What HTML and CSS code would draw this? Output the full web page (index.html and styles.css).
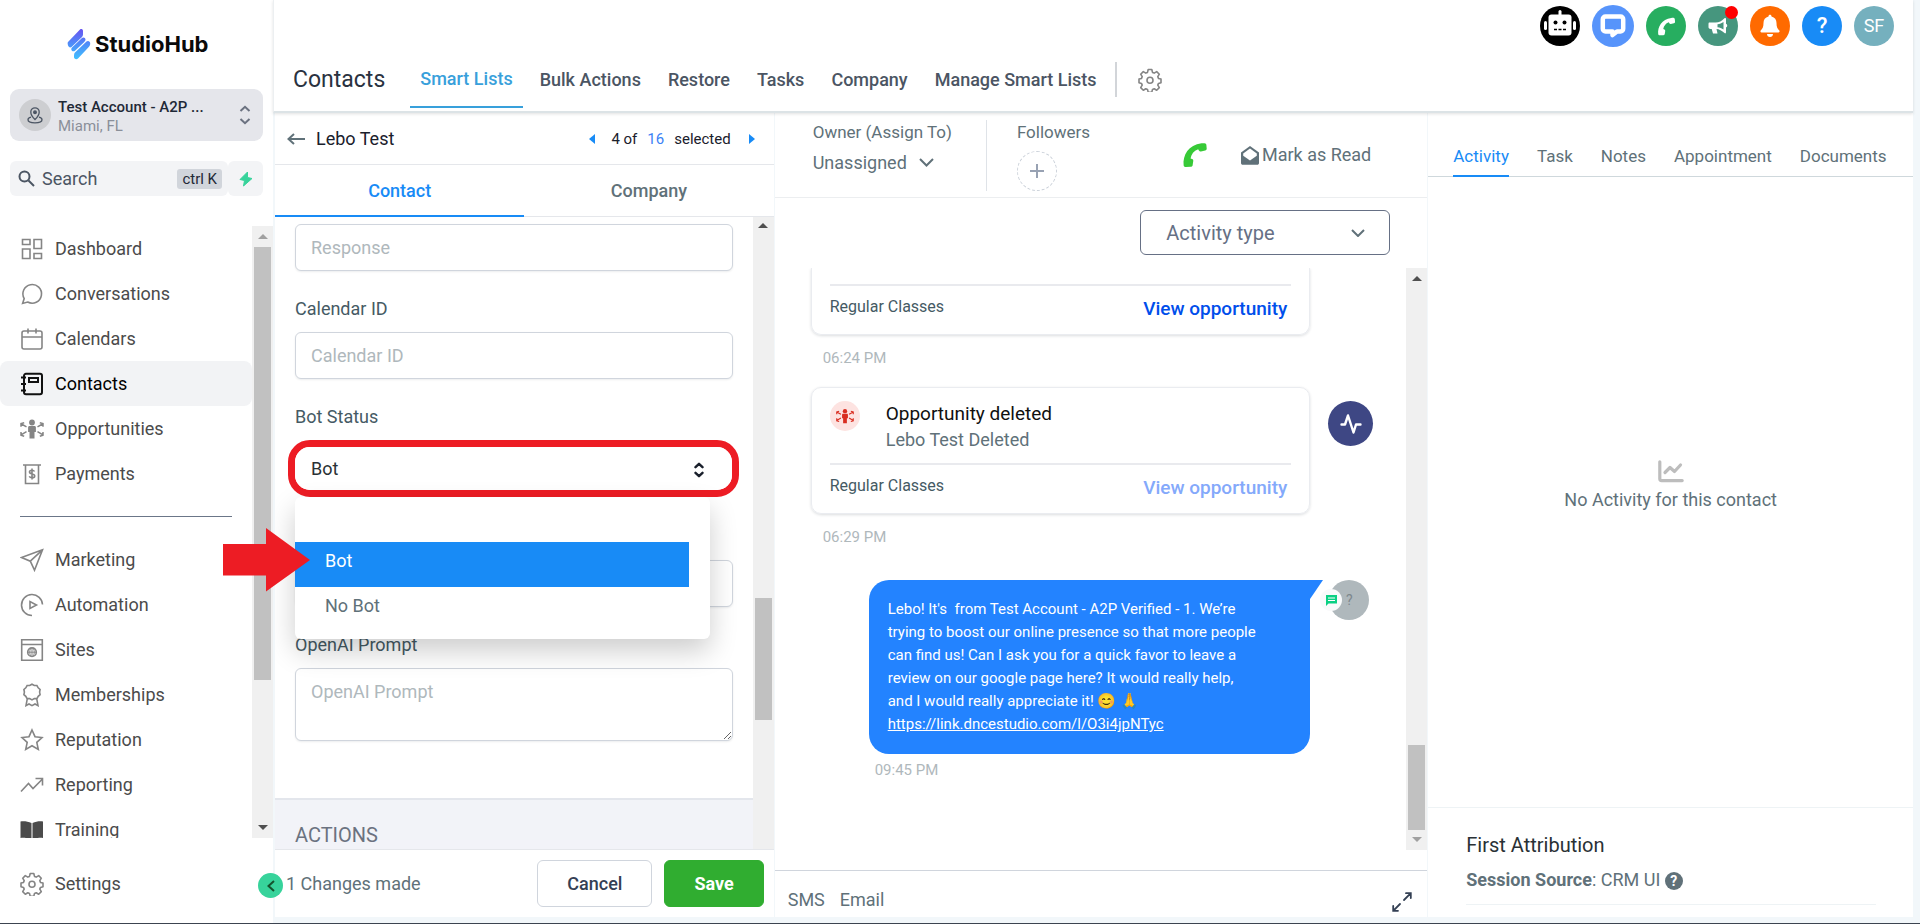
FILE: index.html
```html
<!DOCTYPE html>
<html lang="en">
<head>
	<meta charset="utf-8">
	<title>Contacts - StudioHub</title>
	<link rel="stylesheet" href="styles.css">
</head>
<body>

<div class="app">

	<!-- sidebar -->
	<aside class="sidebar">
		<a class="logo" href="#">
			<svg width="24" height="32" viewBox="0 0 24 32">
				<defs>
					<linearGradient id="lg" x1="0" y1="0" x2="0" y2="32" gradientUnits="userSpaceOnUse">
						<stop offset="0" stop-color="#6a4ff0"/><stop offset=".5" stop-color="#4f8df8"/><stop offset="1" stop-color="#3fc3ff"/>
					</linearGradient>
				</defs>
				<g fill="url(#lg)">
					<path d="M1 14 13 1.500c1-1 3-.5 3 1.500v3.500c0 1-.3 1.700-1 2.400L4.500 19C3 20.300.8 18.500.8 16.500.8 15.300.3 15 1 14z"/>
					<path d="M5 19.500 15 10c1.500-1.300 3.500-.2 3.500 1.500 0 1-.5 1.700-1.200 2.400L8 22.700c-1.500 1.300-3.800.3-3.700-1.500 0-.7.2-1.200.7-1.700z"/>
					<path d="M8 24.500 19.500 13.500c1.500-1.300 3.800-.2 3.700 1.800 0 1.700-.4 2.700-1.200 3.500L11 30.500c-1.500 1.300-4 .6-4-1.500 0-2 0-3.500 1-4.500z"/>
				</g>
			</svg>
			<span>StudioHub</span>
		</a>

		<button class="account" type="button">
			<span class="account-pin">
				<svg width="16" height="17" viewBox="0 0 16 17" fill="none" stroke="#4b5563" stroke-width="1.300">
					<path d="M8 12.500S3.800 8.500 3.800 5a4.200 4.200 0 0 1 8.400 0c0 3.500-4.200 7.500-4.200 7.500z"/><circle cx="8" cy="5.200" r="1.300" fill="#4b5563"/>
					<path d="M4 10.200C2.200 10.700 1 11.700 1 12.700 1 14.500 4 15.800 8 15.800s7-1.300 7-3.100c0-1-1.200-2-3-2.500"/>
				</svg>
			</span>
			<span class="account-text">
				<b>Test Account - A2P ...</b>
				<small>Miami, FL</small>
			</span>
			<svg width="12" height="20" viewBox="0 0 12 20" fill="none" stroke="#6b7280" stroke-width="2"><path d="M1.500 6 6 1.800 10.500 6M1.500 14 6 18.200 10.500 14"/></svg>
		</button>

		<div class="search-row">
			<label class="search">
				<svg width="17" height="17" viewBox="0 0 17 17" fill="none" stroke="#4b5563" stroke-width="2"><circle cx="6.500" cy="6.500" r="5"/><path d="m10.500 10.500 5.500 5.500"/></svg>
				<input type="text" placeholder="Search" aria-label="Search">
				<kbd>ctrl K</kbd>
			</label>
			<button class="bolt" type="button" aria-label="Quick actions">
				<svg width="14" height="16" viewBox="0 0 14 16" fill="#37d39b" stroke="#37d39b" stroke-linejoin="round"><path d="M8.500 1 1 8.500l4.500 1L4.500 15 13 7.500l-4.500-1z"/></svg>
			</button>
		</div>

		<div class="nav-wrap">
			<nav class="nav">
				<a href="#"><svg class="ico" viewBox="0 0 24 24"><path d="M2.500 2.500h7.500v5H2.500zM14 2.500h7.500v9H14zM2.500 12H10v9.500H2.500zM14 16.500h7.500v5H14z"/></svg>Dashboard</a>
				<a href="#"><svg class="ico" viewBox="0 0 24 24"><path d="M2.600 21.400l1.600-4.800a9.300 9.300 0 1 1 3.500 3.400z"/></svg>Conversations</a>
				<a href="#"><svg class="ico" viewBox="0 0 24 24"><path d="M4 4h16a2 2 0 0 1 2 2v14a2 2 0 0 1-2 2H4a2 2 0 0 1-2-2V6a2 2 0 0 1 2-2zM2 10h20M8 1.500V6.500M16 1.500V6.500"/></svg>Calendars</a>
				<a href="#" class="active"><svg class="ico" viewBox="0 0 24 24"><path d="M6 1.800h14a2 2 0 0 1 2 2v16.400a2 2 0 0 1-2 2H6a2 2 0 0 1-2-2V3.800a2 2 0 0 1 2-2zM1 5.500h5M1 12h5M1 18.500h5M9 6h9v4H9z"/></svg>Contacts</a>
				<a href="#"><svg class="ico fill" viewBox="0 0 24 24"><use href="#people"/></svg>Opportunities</a>
				<a href="#"><svg class="ico" viewBox="0 0 24 24"><path d="M3 3h18M5.500 3v18.500h13V3M14.500 9.500c-.5-1-1.300-1.200-2.500-1.200-1.500 0-2.500.7-2.500 1.800 0 2.600 5.200 1.200 5.200 3.900 0 1.200-1.200 1.800-2.700 1.800s-2.300-.5-2.700-1.500M12 6.500v11"/></svg>Payments</a>
				<hr>
				<a href="#"><svg class="ico" viewBox="0 0 24 24"><path d="M22.500 1.800 1.500 9.500l8.800 3.700 4.200 9zM22.500 1.800 10.300 13.200"/></svg>Marketing</a>
				<a href="#"><svg class="ico" viewBox="0 0 24 24"><path d="M12 22.500A10.500 10.500 0 1 1 22.500 11.500M10 8.500v7l6.500-3.500z"/></svg>Automation</a>
				<a href="#"><svg class="ico" viewBox="0 0 24 24"><path d="M1.700 1.700h20.600v20.600H1.700zM1.700 6.500h20.600"/><circle cx="12" cy="14.200" r="4.300"/><path d="M7.700 14.200h8.600M12 10v8.500M10.500 10.500c-1 2.500-1 5 0 7.500M13.500 10.500c1 2.500 1 5 0 7.500" stroke-width="1"/></svg>Sites</a>
				<a href="#"><svg class="ico" viewBox="0 0 24 24"><path d="M12 1.200l2.300 1.300h2.600l1.300 2.300 1.900 1.700-.5 2.600.5 2.500-1.900 1.700-1.300 2.300h-2.600L12 16.900l-2.300-1.300H7.100l-1.300-2.300-1.900-1.700.5-2.500-.5-2.600 1.900-1.700 1.300-2.300h2.600zM7.300 15.600 6 22.600l3-1.600 3 1.600 3-1.600 3 1.600-1.300-7"/></svg>Memberships</a>
				<a href="#"><svg class="ico" viewBox="0 0 24 24"><path d="M12 2l3 6.700 7 .8-5.200 4.800 1.500 7.200L12 17.800l-6.300 3.700 1.500-7.200L2 9.500l7-.8z"/></svg>Reputation</a>
				<a href="#"><svg class="ico" viewBox="0 0 24 24"><path d="M1 18.500l7.500-8 4.500 5L22.500 6M15.500 5.500h7v7"/></svg>Reporting</a>
				<a href="#"><svg class="ico fill dark" viewBox="0 0 24 24"><path d="M.5 3.500C4 3 8 3.500 11.500 5v16.500C8 20 4 19.500.5 20zM23 3.500c-3.500-.5-7 0-10.500 1.500v16.500c3.500-1.500 7-2 10.500-1.500z"/></svg>Training</a>
			</nav>
			<div class="bar bar-nav">
				<i class="up off"></i><i class="thumb"></i><i class="down"></i>
			</div>
		</div>

		<a class="settings" href="#"><svg class="ico" viewBox="0 0 24 24"><use href="#gear"/></svg>Settings</a>
	</aside>

	<div class="page">

		<!-- header -->
		<header class="header">
			<div class="top-icons">
				<button class="round robot" type="button" aria-label="Bot">
					<svg width="34" height="34" viewBox="0 0 34 34"><g fill="#fff"><rect x="15.500" y="1" width="3" height="6" rx="1.500"/><rect x="5.500" y="5.500" width="23" height="21" rx="3"/><rect x="1" y="12" width="3" height="9" rx="1.500"/><rect x="30" y="12" width="3" height="9" rx="1.500"/></g><circle cx="12.500" cy="13.500" r="2"/><circle cx="21.500" cy="13.500" r="2"/><path d="M11 20.500h12" stroke="#000" stroke-width="1.600" stroke-dasharray="3 1.500"/></svg>
				</button>
				<button class="round chat" type="button" aria-label="Chat">
					<svg width="26" height="26" viewBox="0 0 26 26" fill="none" stroke="#fff" stroke-width="4.500" stroke-linejoin="round"><path d="M5.500 3.500h15c1.500 0 2.700 1.200 2.700 2.700v9.600c0 1.500-1.200 2.700-2.700 2.700H17l-4.500 3.500v-3.500h-7c-1.500 0-2.700-1.200-2.700-2.700V6.200C2.800 4.700 4 3.500 5.500 3.500z"/></svg>
				</button>
				<button class="round phone" type="button" aria-label="Call"><svg width="19" height="19" viewBox="0 0 24 24" fill="#fff"><use href="#handset"/></svg></button>
				<button class="round news" type="button" aria-label="News">
					<svg width="20" height="20" viewBox="0 0 20 20"><path d="M1 6.500h6.500C11 6.500 14 5 16.500 2.200c.6-.6 1.500-.3 1.500.5v5c1.700.6 1.700 3.300 0 3.900v5c0 .8-.9 1.100-1.500.5C14 14.500 11 13 8.500 12.900l1 4.600H5l-1.300-4.600H2.500C1 12.900.500 12 .500 11V8c0-.8.2-1.300.5-1.500z" fill="#fff"/><path d="M9.500 8.200c2.300-.2 4.300-1 6-2.200v7.500c-1.700-1.200-3.700-2-6-2.200z" fill="#46967e"/></svg>
					<i class="dot"></i>
				</button>
				<button class="round bell" type="button" aria-label="Notifications"><svg width="20" height="24" viewBox="0 0 20 24" fill="#fff"><path d="M10 .8c.9 0 1.500.6 1.500 1.600 3.300.8 5 3.300 5 6.600 0 4 .8 5.500 2.800 7.600.6.700.2 1.900-.9 1.900H1.600c-1.100 0-1.500-1.200-.9-1.900 2-2.100 2.800-3.600 2.800-7.600 0-3.300 1.700-5.800 5-6.600 0-1 .6-1.600 1.500-1.600zM7 20h6c0 1.700-1.300 3-3 3s-3-1.300-3-3z"/></svg></button>
				<button class="round help" type="button" aria-label="Help">?</button>
				<button class="round user" type="button">SF</button>
			</div>
			<div class="header-nav">
				<h1>Contacts</h1>
				<nav class="tabs">
					<a href="#" class="on">Smart Lists</a>
					<a href="#">Bulk Actions</a>
					<a href="#">Restore</a>
					<a href="#">Tasks</a>
					<a href="#">Company</a>
					<a href="#">Manage Smart Lists</a>
				</nav>
				<button class="gear" type="button" aria-label="Settings"><svg class="ico" viewBox="0 0 24 24"><use href="#gear"/></svg></button>
			</div>
		</header>

		<main class="panels">

			<!-- contact details -->
			<section class="contact">
				<div class="contact-top">
					<a href="#" aria-label="Back"><svg width="18" height="12" viewBox="0 0 18 12" fill="none" stroke="#607179" stroke-width="2"><path d="M18 6H1.500M7 1 1.500 6 7 11"/></svg></a>
					<span class="name">Lebo Test</span>
					<div class="pager">
						<button type="button" aria-label="Previous"><svg width="6" height="10" viewBox="0 0 6 10" fill="#188bf6"><path d="M6 0v10L0 5z"/></svg></button>
						<span>4 of</span><a href="#">16</a><span>selected</span>
						<button type="button" aria-label="Next"><svg width="6" height="10" viewBox="0 0 6 10" fill="#188bf6"><path d="M0 0v10l6-5z"/></svg></button>
					</div>
				</div>
				<div class="contact-tabs">
					<a href="#" class="on">Contact</a>
					<a href="#">Company</a>
				</div>
				<div class="scroll-wrap">
					<form class="form">
						<input class="field" type="text" placeholder="Response" aria-label="Response">
						<label for="cal">Calendar ID</label>
						<input class="field" id="cal" type="text" placeholder="Calendar ID">
						<label for="bot">Bot Status</label>
						<div class="bot-select">
							<select id="bot"><option>Bot</option><option>No Bot</option></select>
							<svg width="10" height="16" viewBox="0 0 10 16" fill="none" stroke="#1a202c" stroke-width="2.400" stroke-linecap="round" stroke-linejoin="round"><path d="M1.500 5.200 5 1.800l3.500 3.400M1.500 10.800 5 14.200l3.500-3.400"/></svg>
							<div class="menu" role="listbox" aria-label="Bot Status">
								<button type="button" role="option" aria-label="None"></button>
								<button type="button" role="option" aria-selected="true" class="sel">Bot</button>
								<button type="button" role="option">No Bot</button>
							</div>
						</div>
						<input class="field under" type="text" aria-label="Value">
						<label for="prompt">OpenAI Prompt</label>
						<textarea class="field" id="prompt" placeholder="OpenAI Prompt"></textarea>
						<div class="actions">ACTIONS</div>
					</form>
					<div class="bar bar-contact">
						<i class="up"></i><i class="thumb"></i>
					</div>
				</div>
				<div class="contact-foot">
					<span>1 Changes made</span>
					<button type="button" class="btn">Cancel</button>
					<button type="button" class="btn save">Save</button>
				</div>
			</section>

			<!-- conversation -->
			<section class="talk">
				<div class="talk-top">
					<div class="owner">
						<span>Owner (Assign To)</span>
						<button type="button">Unassigned <svg width="15" height="9" viewBox="0 0 15 9" fill="none" stroke="#607179" stroke-width="2"><path d="M1 1l6.500 6.500L14 1"/></svg></button>
					</div>
					<div class="followers">
						<span>Followers</span>
						<button type="button" class="plus" aria-label="Add follower"><svg width="14" height="14" viewBox="0 0 14 14" stroke="#98a2b3" stroke-width="2"><path d="M7 0v14M0 7h14"/></svg></button>
					</div>
					<button type="button" class="call" aria-label="Call"><svg width="26" height="26" viewBox="0 0 24 24" fill="#37ca37"><use href="#handset"/></svg></button>
					<button type="button" class="mark"><svg width="18" height="19" viewBox="0 0 18 19"><path d="M0 6.500 9 0l9 6.500V17c0 1-.8 1.800-1.800 1.800H1.800C.8 18.800 0 18 0 17z" fill="#607179"/><path d="M2.200 7.500 9 2.500l6.800 5v2.200L9 14.500 2.200 9.700z" fill="#fff"/></svg>Mark as Read</button>
				</div>
				<div class="filter">
					<select aria-label="Activity type"><option>Activity type</option></select>
					<svg width="14" height="8" viewBox="0 0 14 8" fill="none" stroke="#607179" stroke-width="2"><path d="M1 1l6 6 6-6"/></svg>
				</div>
				<div class="scroll-wrap">
					<div class="feed">
						<article class="card cut">
							<div class="card-foot"><span>Regular Classes</span><a href="#">View opportunity</a></div>
						</article>
						<time>06:24 PM</time>
						<div class="row">
							<article class="card">
								<div class="card-head">
									<span class="opp"><svg width="18" height="18" viewBox="0 0 24 24"><use href="#people"/></svg></span>
									<div><h2>Opportunity deleted</h2><p>Lebo Test Deleted</p></div>
								</div>
								<div class="card-foot"><span>Regular Classes</span><a href="#" class="off">View opportunity</a></div>
							</article>
							<span class="pulse"><svg width="22" height="20" viewBox="0 0 22 20" fill="none" stroke="#fff" stroke-width="2.400" stroke-linecap="round" stroke-linejoin="round"><path d="M1.500 10.500H5L8 1.500l5.500 17 2.500-8h4.500"/></svg></span>
						</div>
						<time>06:29 PM</time>
						<div class="row msg-row">
							<div class="bubble">Lebo! It's&nbsp; from Test Account - A2P Verified - 1. We’re trying to boost our online presence so that more people can find us! Can I ask you for a quick favor to leave a review on our google page here? It would really help, and I would really appreciate it! 😊 🙏<br><a href="#">https://link.dncestudio.com/l/O3i4jpNTyc</a></div>
							<span class="avatar">?<i><svg width="11" height="11" viewBox="0 0 11 11"><path d="M0 0h11v8.500H2.500L0 11z" fill="#0bd084"/><path d="M2 3h7M2 5.500h7" stroke="#fff"/></svg></i></span>
						</div>
						<time class="out">09:45 PM</time>
					</div>
					<div class="bar bar-talk">
						<i class="up"></i><i class="thumb"></i><i class="down off"></i>
					</div>
				</div>
				<div class="talk-foot">
					<a href="#">SMS</a><a href="#">Email</a>
					<button type="button" aria-label="Expand"><svg width="20" height="20" viewBox="0 0 20 20" fill="none" stroke="#344054" stroke-width="1.800" stroke-linecap="round"><path d="M14 1.200H18.800V6M18.300 1.700l-6.300 6.300M6 18.800H1.200V14M1.700 18.300l6.300-6.300"/></svg></button>
				</div>
			</section>

			<!-- activity -->
			<section class="activity">
				<div class="activity-tabs">
					<a href="#" class="on">Activity</a>
					<a href="#">Task</a>
					<a href="#">Notes</a>
					<a href="#">Appointment</a>
					<a href="#">Documents</a>
				</div>
				<div class="empty">
					<svg width="26" height="23" viewBox="0 0 26 23" fill="none" stroke="#bdbdbd" stroke-width="3.200" stroke-linecap="round" stroke-linejoin="round"><path d="M1.800 1.800v17c0 1.200.6 1.800 1.800 1.800h20.600M7 12.500l5-5 4.500 4L22.500 5"/></svg>
					<span>No Activity for this contact</span>
				</div>
				<div class="attribution">
					<h3>First Attribution</h3>
					<p><b>Session Source</b>: CRM UI <i>?</i></p>
				</div>
			</section>
		</main>
	</div>
</div>

<button class="collapse" type="button" aria-label="Collapse"><svg width="8" height="12" viewBox="0 0 8 12" fill="none" stroke="#14532d" stroke-width="2"><path d="M7 1 1.500 6 7 11"/></svg></button>

<svg class="arrow" width="87" height="64" viewBox="0 0 87 64"><path d="M0 16h43V0l44 32-44 31.500V47.500H0z" fill="#ed1c24"/></svg>

<!-- shared shapes -->
<svg width="0" height="0" class="defs">
	<defs>
		<g id="gear">
			<path d="M10.200 1.500h3.600l.7 2.900 1.700.7 2.500-1.500 2.600 2.600-1.500 2.500.7 1.700 2.500.7v3.600l-2.500.7-.7 1.700 1.500 2.500-2.600 2.600-2.500-1.500-1.700.7-.7 2.800h-3.600l-.7-2.800-1.700-.7-2.500 1.500-2.600-2.600 1.500-2.500-.7-1.700-2.500-.7v-3.600l2.500-.7.7-1.700-1.500-2.500 2.600-2.600 2.500 1.500 1.700-.7z" stroke-linejoin="round"/>
			<circle cx="12" cy="12.300" r="3"/>
		</g>
		<g id="people">
			<circle cx="12" cy="5.500" r="2.900" fill="currentColor" stroke="none"/>
			<path d="M9.500 9h5c.8 0 1.400.6 1.400 1.400V15h-1.400v6.500h-5V15H8.100v-4.600C8.100 9.600 8.700 9 9.500 9z" fill="currentColor" stroke="none"/>
			<path d="M6.500 9.800 1.500 7M17.500 9.800l5-2.800M6.500 14.700l-5 3M17.500 14.700l5 3M1 9.800V6.500l3.200-.8M23 9.800V6.500l-3.200-.8M1 15v3.300l3.200 1M23 15v3.300l-3.200 1" fill="none" stroke="currentColor" stroke-width="1.500"/>
		</g>
		<g id="handset">
			<path d="M1.500 21.500C.5 12.500 6 2.500 18 1.200c1.500-.2 2.700-.2 3.500.1.700.2.900.8 1 1.500l.3 3.200c.1.900-.5 1.600-1.400 1.800l-3.900.9c-.8.200-1.500-.1-1.900-.8l-.7-1.200c-4 1.500-6.300 4.500-7 8.600l1.400.5c.8.300 1.200 1 1.100 1.800l-.6 3.900c-.1.900-.8 1.400-1.700 1.400l-4.500.2c-1.300 0-2-.5-2.100-1.600z"/>
		</g>
	</defs>
</svg>

</body>
</html>
```
FILE: styles.css
```css
* {
  box-sizing: border-box;
}
html, body {
  height: 100%;
}
body {
  margin: 0;
  font-family: Roboto, "Liberation Sans", sans-serif;
  font-size: 18px;
  line-height: 24px;
  color: #607179;
  background: #f2f7fa;
  overflow: hidden;
}
a {
  color: inherit;
  text-decoration: none;
}
button {
  font: inherit;
  color: inherit;
  background: none;
  border: 0;
  padding: 0;
  cursor: pointer;
}
input, select, textarea {
  font: inherit;
}
svg {
  display: block;
  flex: none;
}
h1, h2, h3, p {
  margin: 0;
  font-weight: 400;
}
.defs {
  position: absolute;
}
.app {
  display: flex;
  height: 100vh;
  border-bottom: 1px solid #3c4450;
}

/* sidebar */
.sidebar {
  flex: none;
  width: 273px;
  display: flex;
  flex-direction: column;
  background: #fff;
}
.logo {
  display: flex;
  align-items: center;
  gap: 4px;
  height: 32px;
  margin: 28px 0 29px 67px;
  font: 700 22px Inter, sans-serif;
  color: #0a0a0a;
}
.account {
  display: flex;
  align-items: center;
  height: 52px;
  margin: 0 10px;
  padding: 0 12px 0 9px;
  border-radius: 9px;
  background: #e5e6eb;
  text-align: left;
}
.account-pin {
  display: flex;
  align-items: center;
  justify-content: center;
  width: 32px;
  height: 32px;
  margin-right: 7px;
  border-radius: 50%;
  background: #cdced1;
}
.account-text {
  flex: 1;
  padding-top: 4px;
  font-size: 15px;
  line-height: 19px;
}
.account-text b {
  display: block;
  font-weight: 500;
  color: #1f2937;
}
.account-text small {
  display: block;
  font-size: 15px;
  color: #8a8f99;
}
.search-row {
  display: flex;
  height: 35px;
  margin: 20px 10px 30px;
}
.search {
  flex: 1;
  display: flex;
  align-items: center;
  gap: 7px;
  min-width: 0;
  padding: 0 6px 0 8px;
  border-radius: 6px;
  background: #f3f4f6;
}
.search input {
  flex: 1;
  min-width: 0;
  border: 0;
  padding: 0;
  background: none;
}
.search input::placeholder {
  color: #4b5563;
}
kbd {
  padding: 0 5px;
  border-radius: 3px;
  background: #d1d5db;
  font: 15px/20px Roboto, sans-serif;
  color: #1f2937;
}
.bolt {
  display: flex;
  align-items: center;
  justify-content: center;
  width: 35px;
  border-radius: 6px;
  background: #f3f4f6;
}
.nav-wrap {
  flex: 1;
  min-height: 0;
  display: flex;
  overflow: hidden;
}
.nav {
  flex: 1;
}
.nav a, .settings {
  display: flex;
  align-items: center;
  gap: 11px;
  height: 45px;
  padding-left: 20px;
  color: #4b4b4b;
}
.nav a.active {
  border-radius: 8px;
  background: #f2f3f5;
  color: #000;
}
.nav hr {
  margin: 20px;
  border: 0;
  border-top: 1px solid #6b7688;
}
.settings {
  margin: 23px 0 17px;
}
.ico {
  width: 24px;
  height: 24px;
  fill: none;
  stroke: #858585;
  stroke-width: 1.6;
}
.active .ico {
  stroke: #111;
  stroke-width: 2;
}
.ico.fill {
  color: #858585;
  fill: #858585;
  stroke: none;
}
.ico.dark {
  fill: #4b4b4b;
}

/* scrollbars */
.bar {
  flex: none;
  display: flex;
  flex-direction: column;
  align-items: center;
  width: 21px;
  background: #f0f0f0;
}
.bar .thumb {
  width: 17px;
  background: #c1c1c1;
}
.bar .up, .bar .down {
  margin: 8px 0;
  border: 5px solid transparent;
  border-top: 0;
  border-bottom-color: #4f4f4f;
}
.bar .down {
  margin-top: auto;
  border: 5px solid transparent;
  border-bottom: 0;
  border-top-color: #4f4f4f;
}
.bar .up.off {
  border-bottom-color: #a0a0a0;
}
.bar .down.off {
  border-top-color: #a0a0a0;
}
.bar-nav .thumb {
  height: 433px;
}
.bar-contact .up {
  margin-top: 6px;
}
.bar-contact .thumb {
  margin-top: 362px;
  height: 122px;
}
.bar-talk .thumb {
  margin-top: auto;
  height: 85px;
}
.bar-talk .down {
  margin-top: 7px;
}

/* header */
.page {
  flex: 1;
  min-width: 0;
  display: flex;
  flex-direction: column;
  padding: 0 7px 6px 0;
}
.header {
  position: relative;
  z-index: 1;
  height: 113px;
  padding-top: 5px;
  border-bottom: 2px solid #dce3e6;
  border-left: 1px solid #eceff1;
  background: #fff;
  box-shadow: 0 1px 3px rgba(0, 0, 0, .12);
}
.top-icons {
  display: flex;
  align-items: center;
  justify-content: flex-end;
  gap: 12px;
  height: 42px;
  padding-right: 19px;
}
.round {
  position: relative;
  display: flex;
  align-items: center;
  justify-content: center;
  width: 40px;
  height: 40px;
  border-radius: 50%;
  color: #fff;
}
.robot { background: #000; }
.chat { width: 42px; height: 42px; background: #5794fb; }
.phone { background: #27ae60; }
.news { background: #46967e; }
.bell { background: #ff6a00; }
.help { background: #188bf6; font-size: 22px; font-weight: 500; }
.user { background: #75b0be; }
.dot {
  position: absolute;
  top: 0;
  right: 0;
  width: 13px;
  height: 13px;
  border-radius: 50%;
  background: #f00;
}
.header-nav {
  display: flex;
  align-items: center;
  height: 61px;
  padding: 4px 0 0 19px;
}
h1 {
  margin-right: 25px;
  font-size: 23px;
  font-weight: 400;
  color: #2a3240;
}
.tabs {
  display: flex;
  align-items: center;
  height: 57px;
  gap: 27px;
  padding-right: 18px;
  color: #4b5563;
  font-weight: 500;
}
.tabs a.on {
  margin-right: -10px;
  padding: 0 10px;
  border-bottom: 2px solid #38a0db;
  color: #38a0db;
  line-height: 55px;
}
.gear {
  display: flex;
  align-items: center;
  height: 35px;
  padding-left: 21px;
  border-left: 2px solid #d2d5d9;
}

/* panels */
.panels {
  flex: 1;
  min-height: 0;
  display: grid;
  grid-template-columns: 499fr 653fr 485fr;
  column-gap: 1px;
  padding-left: 2px;
}
.panels > section {
  min-width: 0;
  min-height: 0;
  display: flex;
  flex-direction: column;
  background: #fff;
}
.scroll-wrap {
  flex: 1;
  min-height: 0;
  display: flex;
  overflow: hidden;
}
.contact-top {
  display: flex;
  align-items: center;
  height: 52px;
  padding: 0 19px 0 12px;
  border-bottom: 1px solid #e5e7eb;
  color: #1a202c;
}
.name {
  flex: 1;
  padding-left: 11px;
}
.pager {
  display: flex;
  align-items: center;
  gap: 10px;
  font-size: 15px;
}
.pager button:first-child {
  margin-right: 6px;
}
.pager button:last-child {
  margin-left: 8px;
}
.pager a {
  color: #3b82f6;
}
.contact-tabs {
  display: flex;
  height: 52px;
  font-weight: 500;
  line-height: 51px;
  text-align: center;
}
.contact-tabs a {
  flex: 1;
  border-bottom: 1px solid #e5e7eb;
}
.contact-tabs a.on {
  border-bottom: 2px solid #188bf6;
  color: #188bf6;
}
.form {
  flex: 1;
  display: flex;
  flex-direction: column;
  padding: 7px 20px 0;
}
.form label {
  margin: 26px 0 11px;
  color: #455a64;
}
.field {
  flex: none;
  display: block;
  width: 100%;
  height: 47px;
  padding: 0 15px;
  border: 1px solid #d0d5dd;
  border-radius: 6px;
  background: #fff;
  box-shadow: 0 1px 2px rgba(16, 24, 40, .08);
}
.field::placeholder {
  color: #afb8bc;
}
textarea.field {
  height: 73px;
  padding: 11px 15px;
}
.under {
  margin-top: 63px;
}
.bot-select {
  position: relative;
  flex: none;
  height: 57px;
  margin: 0 -6px 0 -7px;
  border: 7px solid #ed1c24;
  border-radius: 22px;
}
.bot-select select {
  width: 100%;
  height: 43px;
  padding: 1px 16px 0;
  border: 0;
  border-radius: 15px;
  background: #fff;
  appearance: none;
  color: #2a3135;
}
.bot-select > svg {
  position: absolute;
  top: 15px;
  right: 28px;
}
.menu {
  position: absolute;
  z-index: 2;
  top: 50px;
  left: 0;
  right: 22px;
  display: flex;
  flex-direction: column;
  height: 142px;
  border-radius: 6px;
  background: #fff;
  box-shadow: 0 12px 28px rgba(0, 0, 0, .2);
}
.menu button {
  height: 45px;
  margin-right: 21px;
  padding: 0 0 8px 30px;
  text-align: left;
}
.menu button.sel {
  background: #188bf6;
  color: #fff;
}
.actions {
  flex: 1;
  margin: 57px -20px 0;
  padding: 23px 20px;
  border-top: 2px solid #e3e6ec;
  background: #f2f3f8;
  font-size: 20px;
  color: #6b7280;
}
.contact-foot {
  display: flex;
  align-items: center;
  gap: 12px;
  height: 68px;
  padding: 0 10px 0 11px;
  border-top: 1px solid #e5e7eb;
}
.contact-foot span {
  flex: 1;
}
.btn {
  height: 47px;
  padding: 0 29px;
  border: 1px solid #d0d5dd;
  border-radius: 6px;
  font-weight: 500;
  color: #344054;
}
.btn.save {
  border-color: #30ad30;
  background: #30ad30;
  color: #fff;
  font-weight: 700;
}

/* conversation */
.talk-top {
  display: flex;
  align-items: center;
  height: 85px;
  padding: 0 56px 0 38px;
  border-bottom: 1px solid #eceef0;
}
.owner, .followers {
  height: 71px;
}
.owner {
  padding-right: 34px;
  border-right: 1px solid #dfe3e8;
}
.followers {
  flex: 1;
  padding-left: 30px;
}
.owner button {
  display: flex;
  align-items: center;
  gap: 12px;
  margin-top: 7px;
}
.owner span, .followers span {
  display: block;
  font-size: 17px;
}
.plus {
  display: flex;
  align-items: center;
  justify-content: center;
  width: 40px;
  height: 40px;
  margin-top: 7px;
  border: 1px dashed #ccd2da;
  border-radius: 50%;
}
.call {
  margin-right: 33px;
}
.mark {
  display: flex;
  align-items: center;
  gap: 3px;
}
.filter {
  position: relative;
  flex: none;
  align-self: flex-end;
  width: 250px;
  margin: 12px 37px 13px;
}
.filter select {
  display: block;
  width: 100%;
  height: 45px;
  padding: 0 25px;
  border: 1px solid #667085;
  border-radius: 6px;
  background: #fff;
  appearance: none;
  font-size: 20px;
  color: #667085;
}
.filter svg {
  position: absolute;
  top: 19px;
  right: 25px;
}
.feed {
  flex: 1;
  min-width: 0;
  padding: 0 33px 0 36px;
}
.row {
  display: flex;
  align-items: flex-start;
}
.card {
  flex: 1;
  padding: 13px 18px 0;
  border: 1px solid #eaecf0;
  border-radius: 10px;
  box-shadow: 0 1px 3px rgba(16, 24, 40, .15);
}
.card.cut {
  height: 67px;
  margin-right: 63px;
  padding-top: 16px;
  border-top: 0;
  border-radius: 0 0 10px 10px;
}
.card-head {
  display: flex;
  gap: 26px;
  padding-bottom: 10px;
}
.opp {
  display: flex;
  align-items: center;
  justify-content: center;
  width: 30px;
  height: 30px;
  border-radius: 50%;
  background: #fde3e1;
  color: #d92d20;
}
h2 {
  font-size: 19px;
  line-height: 26px;
  color: #101010;
}
.card-head p {
  line-height: 26px;
}
.card-foot {
  display: flex;
  justify-content: space-between;
  height: 50px;
  padding: 9px 4px 0 0;
  border-top: 2px solid #e9eaee;
  font-size: 16px;
  color: #455a64;
}
.card-foot a {
  font-size: 19px;
  line-height: 28px;
  font-weight: 500;
  color: #004eeb;
}
.card-foot a.off {
  color: #84a9fb;
}
time {
  display: block;
  margin: 11px 0 17px 12px;
  font-size: 15px;
  color: #afb8bc;
}
.pulse {
  display: flex;
  align-items: center;
  justify-content: center;
  width: 45px;
  height: 45px;
  margin: 14px 0 0 18px;
  border-radius: 50%;
  background: #3e4784;
}
.msg-row {
  margin-top: 31px;
}
.bubble {
  position: relative;
  flex: 1;
  margin-left: 58px;
  padding: 18px 50px 18px 19px;
  border-radius: 20px 0 20px 20px;
  background: #2383ff;
  font-size: 15px;
  line-height: 23px;
  color: #fff;
}
.bubble::after {
  content: "";
  position: absolute;
  top: 0;
  left: 100%;
  border-top: 19px solid #2383ff;
  border-right: 13px solid transparent;
}
.bubble a {
  text-decoration: underline;
}
.avatar {
  position: relative;
  width: 40px;
  height: 40px;
  margin: 0 4px 0 19px;
  border-radius: 50%;
  background: #afb8bc;
  font-size: 14px;
  line-height: 40px;
  text-align: center;
  color: #7d878c;
}
.avatar i {
  position: absolute;
  top: 9px;
  left: -9px;
  display: flex;
  align-items: center;
  justify-content: center;
  width: 22px;
  height: 22px;
  border-radius: 50%;
  background: #f9fafb;
}
time.out {
  margin-top: 4px;
  margin-left: 64px;
}
.talk-foot {
  display: flex;
  align-items: center;
  gap: 15px;
  height: 47px;
  margin-top: 20px;
  padding: 12px 15px 0 13px;
  border-top: 1px solid #d0d5dd;
}
.talk-foot button {
  align-self: flex-end;
  margin: 0 0 5px auto;
}

/* activity */
.activity-tabs {
  display: flex;
  gap: 28px;
  height: 64px;
  padding: 31px 25px 0;
  border-bottom: 1px solid #cfd8dc;
  font-size: 17px;
}
.activity-tabs a.on {
  height: 33px;
  border-bottom: 2px solid #188bf6;
  color: #188bf6;
}
.empty {
  flex: 1;
  display: flex;
  flex-direction: column;
  align-items: center;
  justify-content: center;
  gap: 5px;
  padding-bottom: 13px;
}
.attribution {
  height: 110px;
  padding: 25px 37px 0 38px;
  border-top: 1px solid #eef3f5;
}
h3 {
  font-size: 20px;
  color: #2a3135;
}
.attribution p {
  padding: 11px 0 12px;
  border-bottom: 1px solid #eef3f5;
}
.attribution b {
  font-weight: 700;
}
.attribution i {
  display: inline-block;
  width: 18px;
  height: 18px;
  border-radius: 50%;
  background: #607179;
  font: 700 14px/18px Roboto, sans-serif;
  text-align: center;
  color: #fff;
}

/* overlays */
.collapse {
  position: absolute;
  z-index: 3;
  left: 258px;
  bottom: 26px;
  display: flex;
  align-items: center;
  justify-content: center;
  width: 25px;
  height: 25px;
  border-radius: 50%;
  background: #37d39b;
}
.arrow {
  position: absolute;
  z-index: 4;
  left: 223px;
  top: 528px;
}
```
